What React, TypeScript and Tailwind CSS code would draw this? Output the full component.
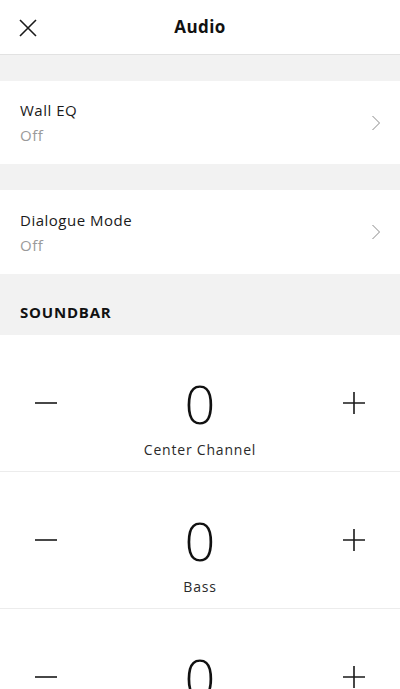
import React from "react";

const font = { fontFamily: '"Open Sans", "Liberation Sans", sans-serif' };

function Chevron() {
  return (
    <svg width="10" height="16" viewBox="0 0 10 16" fill="none">
      <path d="M1.5 1 L8.5 8 L1.5 15" stroke="#8a8a8a" strokeWidth="1" />
    </svg>
  );
}

function SettingRow({ title, value, tall }: { title: string; value: string; tall?: boolean }) {
  return (
    <div className={`flex items-center justify-between bg-white pl-5 pr-[19px] ${tall ? "h-[84px]" : "h-[83px]"}`}>
      <div className="flex flex-col">
        <span className="text-[15px] leading-[20px] text-[#1a1a1a] tracking-[0.5px]">{title}</span>
        <span className="text-[15px] leading-[20px] mt-[5px] text-[#9a9a9a] tracking-[0.5px]">{value}</span>
      </div>
      <Chevron />
    </div>
  );
}

function Stepper({ label }: { label: string }) {
  return (
    <div className="relative flex items-start justify-between bg-white h-[137px] border-b border-[#ececec] px-[35px] pt-[40px]">
      <svg width="22" height="22" viewBox="0 0 22 22" className="mt-[17px]">
        <path d="M0 11 H22" stroke="#1a1a1a" strokeWidth="1.6" />
      </svg>
      <div className="flex flex-col items-center">
        <span className="text-[54px] leading-[56px] font-light text-[#111]">0</span>
        <span className="text-[14px] leading-[18px] mt-[10px] text-[#2a2a2a] tracking-[0.8px]">{label}</span>
      </div>
      <svg width="22" height="22" viewBox="0 0 22 22" className="mt-[17px]">
        <path d="M0 11 H22 M11 0 V22" stroke="#1a1a1a" strokeWidth="1.6" />
      </svg>
    </div>
  );
}

export default function App() {
  return (
    <div className="w-[400px] h-[689px] overflow-hidden bg-[#f2f2f2]" style={font}>
      {/* Header */}
      <div className="relative flex items-center justify-center h-[55px] bg-white border-b border-[#e2e2e2]">
        <svg width="18" height="18" viewBox="0 0 18 18" className="absolute left-[19px] top-[19px]">
          <path d="M1 1 L17 17 M17 1 L1 17" stroke="#1a1a1a" strokeWidth="1.6" />
        </svg>
        <span className="text-[17px] font-bold text-[#111] tracking-[0.4px]">Audio</span>
      </div>

      <div className="h-[26px]" />
      <SettingRow title="Wall EQ" value="Off" />
      <div className="h-[26px]" />
      <SettingRow title="Dialogue Mode" value="Off" tall />

      <div className="flex items-center h-[61px] px-5 pt-[16px]">
        <span className="text-[15px] font-bold text-[#111] tracking-[0.8px]">SOUNDBAR</span>
      </div>

      <Stepper label="Center Channel" />
      <Stepper label="Bass" />
      <Stepper label="Treble" />
    </div>
  );
}
